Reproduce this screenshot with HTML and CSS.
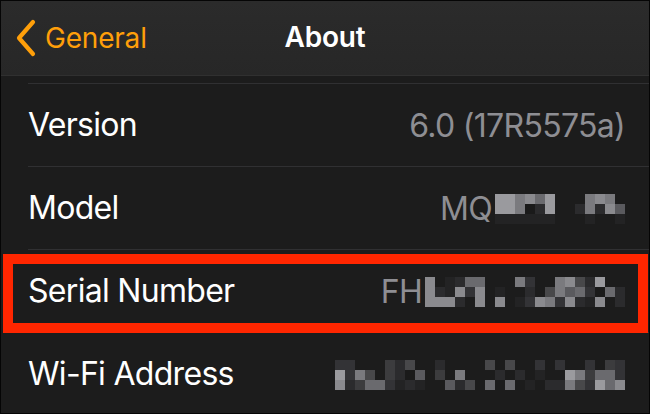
FILE: index.html
```html
<!DOCTYPE html>
<html>
<head>
<meta charset="utf-8">
<link rel="stylesheet" href="styles.css">
</head>
<body>
<div class="frame">
  <header class="nav">
    <div class="back">
      <svg class="chev" width="24" height="38" viewBox="0 0 24 38"><path d="M19 3 L5 19 L19 35" fill="none" stroke="#ff9f0a" stroke-width="4.2" stroke-linecap="round" stroke-linejoin="round"/></svg>
      <span>General</span>
    </div>
    <div class="title">About</div>
  </header>
  <main class="list">
    <div class="row">
      <span class="label">Version</span>
      <span class="value">6.0 (17R5575a)</span>
    </div>
    <div class="row">
      <span class="label">Model</span>
      <span class="value">MQ<span class="pix pix13">
        <i class="kb"></i><i class="kb"></i><i class="k9"></i><i class="ka"></i><i class="k8"></i><i class="kb"></i><i></i><i></i><i></i><i class="k9"></i><i class="ka"></i><i class="k9"></i><i></i>
        <i class="kb"></i><i class="kb"></i><i class="k9"></i><i class="k1"></i><i class="k3"></i><i class="kb"></i><i></i><i></i><i class="k3"></i><i class="k9"></i><i class="k3"></i><i class="ka"></i><i class="k7"></i>
        <i class="k2"></i><i class="k2"></i><i class="k2"></i><i class="k2"></i><i class="k2"></i><i class="k2"></i><i></i><i></i><i></i><i class="k2"></i><i></i><i></i><i class="k2"></i>
      </span></span>
    </div>
    <div class="row">
      <span class="label">Serial Number</span>
      <span class="value">FH<span class="pix pix20">
        <i class="ka"></i><i></i><i class="k2"></i><i class="k3"></i><i class="k8"></i><i class="k8"></i><i></i><i></i><i></i><i class="k9"></i><i class="k4"></i><i></i><i></i><i class="k9"></i><i class="ka"></i><i class="k6"></i><i class="k3"></i><i class="kb"></i><i></i><i></i>
        <i class="ka"></i><i class="k3"></i><i class="k2"></i><i class="ka"></i><i class="k4"></i><i class="ka"></i><i></i><i class="k2"></i><i></i><i></i><i class="k3"></i><i></i><i class="k6"></i><i class="k9"></i><i class="k7"></i><i class="k8"></i><i class="k4"></i><i class="k1"></i><i class="k8"></i><i class="k3"></i>
        <i class="ka"></i><i class="ka"></i><i class="ka"></i><i class="k3"></i><i></i><i class="ka"></i><i></i><i class="ka"></i><i></i><i class="k2"></i><i class="k4"></i><i class="ka"></i><i class="k9"></i><i class="k4"></i><i class="ka"></i><i class="k3"></i><i class="k2"></i><i class="ka"></i><i></i><i class="k3"></i>
      </span></span>
    </div>
    <div class="row">
      <span class="label">Wi-Fi Address</span>
      <span class="value"><span class="pix pix29">
        <i class="k4"></i><i class="k4"></i><i></i><i></i><i></i><i class="k5"></i><i class="k3"></i><i class="k6"></i><i></i><i></i><i class="k3"></i><i></i><i></i><i></i><i></i><i class="k6"></i><i></i><i class="k6"></i><i></i><i></i><i class="k4"></i><i></i><i class="k4"></i><i></i><i></i><i class="k4"></i><i></i><i class="k5"></i><i class="k4"></i>
        <i class="kb"></i><i class="k4"></i><i class="k9"></i><i class="k6"></i><i></i><i class="k5"></i><i class="k3"></i><i class="k1"></i><i class="k7"></i><i></i><i class="k5"></i><i></i><i class="k9"></i><i></i><i></i><i></i><i class="k3"></i><i></i><i class="k3"></i><i></i><i class="k2"></i><i></i><i></i><i class="kb"></i><i class="k9"></i><i class="k5"></i><i class="k8"></i><i class="k8"></i><i class="k4"></i>
        <i class="ka"></i><i class="k3"></i><i class="k5"></i><i class="k8"></i><i class="k8"></i><i class="k4"></i><i class="k2"></i><i class="k3"></i><i class="k2"></i><i></i><i></i><i class="k7"></i><i class="k3"></i><i class="k6"></i><i></i><i class="k8"></i><i></i><i class="k8"></i><i></i><i class="k2"></i><i></i><i class="k3"></i><i class="k3"></i><i class="k9"></i><i class="k6"></i><i class="k4"></i><i class="kb"></i><i class="k8"></i><i class="ka"></i>
      </span></span>
    </div>
  </main>
  <div class="highlight"></div>
</div>
</body>
</html>
```
FILE: styles.css
```css
* { box-sizing: border-box; }
html, body { margin: 0; padding: 0; background: #000; }
body { width: 650px; height: 414px; overflow: hidden; }

.frame {
  position: relative;
  width: 650px;
  height: 414px;
  border: 1px solid #050505;
  background: #1c1c1c;
  font-family: Inter, "Noto Sans", sans-serif;
  overflow: hidden;
  display: flex;
  flex-direction: column;
}

.nav {
  position: relative;
  height: 75px;
  flex: 0 0 75px;
  background: linear-gradient(#2b2b2b, #272727);
  border-bottom: 1px solid #303030;
  display: flex;
  align-items: center;
  justify-content: center;
}
.back {
  position: absolute;
  left: 13px;
  top: 18px;
  display: flex;
  align-items: center;
  gap: 7px;
  color: #ff9f0a;
  font-size: 28px;
  letter-spacing: -0.2px;
}
.chev { display: block; }
.title {
  color: #fff;
  font-size: 28px;
  font-weight: 600;
  margin-top: -2px;
  letter-spacing: -0.2px;
}

.list {
  padding-top: 7px;
  display: flex;
  flex-direction: column;
}
.row {
  position: relative;
  height: 83px;
  flex: 0 0 83px;
  display: flex;
  align-items: center;
  justify-content: space-between;
  padding: 0 24px 0 27px;
}
.row::before {
  content: "";
  position: absolute;
  left: 27px;
  right: 0;
  top: 0;
  height: 1px;
  background: #303032;
}
.label {
  color: #fff;
  font-size: 32px;
  letter-spacing: -0.7px;
}
.value {
  color: #8e8e93;
  font-size: 32px;
  letter-spacing: -0.7px;
  display: flex;
  align-items: center;
  gap: 3px;
  margin-top: 2px;
}

.pix {
  display: grid;
  grid-auto-rows: 10px;
}
.pix13 { grid-template-columns: repeat(13, 10px); }
.pix20 { grid-template-columns: repeat(20, 10px); }
.pix29 { grid-template-columns: repeat(29, 10px); }
.pix i { display: block; width: 10px; height: 10px; }
.k1 { background: #1a1a1a; }
.k2 { background: #232324; }
.k3 { background: #2b2b2d; }
.k4 { background: #333336; }
.k5 { background: #3c3c3e; }
.k6 { background: #48484a; }
.k7 { background: #5a5a5e; }
.k8 { background: #6a6a6e; }
.k9 { background: #7a7a7e; }
.ka { background: #8a8a8e; }
.kb { background: #9a9a9e; }

.highlight {
  position: absolute;
  left: 2px;
  top: 253px;
  width: 645px;
  height: 79px;
  border: 10px solid #ff2600;
}
```
